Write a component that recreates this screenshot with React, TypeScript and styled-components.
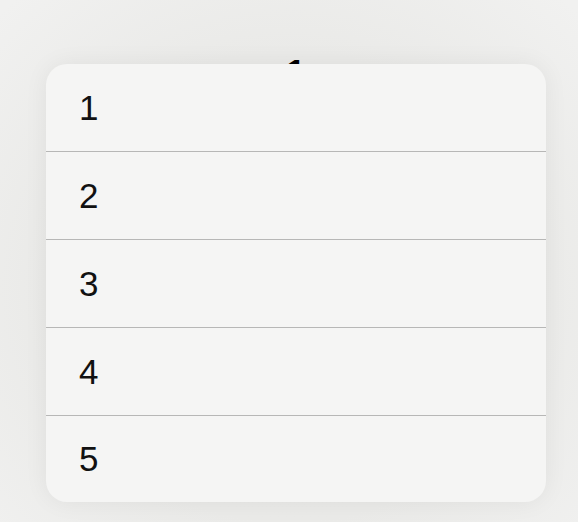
import React from "react";
import styled, { createGlobalStyle } from "styled-components";

const GlobalStyle = createGlobalStyle`
  html, body {
    margin: 0;
    padding: 0;
    background: #ebebe9;
  }
  body {
    font-family: "Liberation Sans", Arial, sans-serif;
  }
`;

const Page = styled.div`
  width: 578px;
  height: 522px;
  box-sizing: border-box;
  padding-top: 54px;
  display: flex;
  flex-direction: column;
  align-items: center;
  overflow: hidden;
  background: radial-gradient(
    ellipse 70% 75% at 50% 55%,
    #e9e9e7 0%,
    #eaeae8 60%,
    #f1f1f0 100%
  );
`;

const Title = styled.div`
  font-size: 34px;
  line-height: 34px;
  height: 34px;
  font-weight: 700;
  color: #000;
  transform: translateX(7px);
`;

const Card = styled.div`
  position: relative;
  z-index: 1;
  margin-top: -24px;
  width: 500px;
  margin-left: 14px;
  background: #f5f5f4;
  border-radius: 21px;
  overflow: hidden;
  box-shadow: 0 0 24px rgba(0, 0, 0, 0.06);
  display: flex;
  flex-direction: column;
`;

const Row = styled.div<{ $last?: boolean }>`
  height: ${(p) => (p.$last ? "86px" : "87px")};
  display: flex;
  align-items: center;
  padding-left: 33px;
  font-size: 35px;
  color: #111;
  border-bottom: ${(p) => (p.$last ? "none" : "1px solid #b7b7b6")};
`;

const items = ["1", "2", "3", "4", "5"];

export default function App() {
  return (
    <>
      <GlobalStyle />
      <Page>
        <Title>1</Title>
        <Card>
          {items.map((it, i) => (
            <Row key={it} $last={i === items.length - 1}>
              {it}
            </Row>
          ))}
        </Card>
      </Page>
    </>
  );
}
